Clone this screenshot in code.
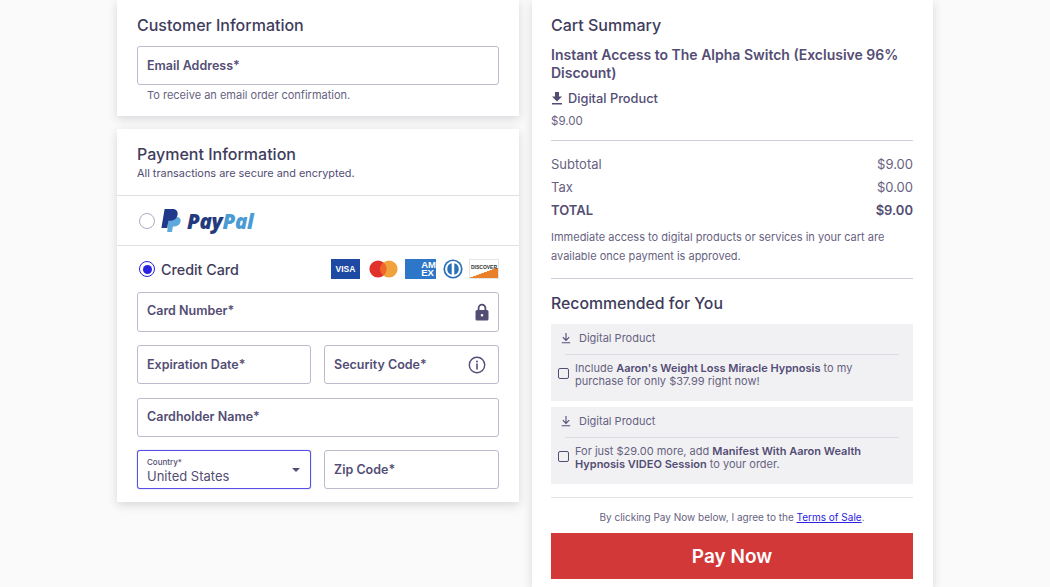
<div class="page">
  <div class="left">
    <section class="card customer">
      <h2>Customer Information</h2>
      <div class="field"><span class="label">Email Address*</span></div>
      <p class="helper">To receive an email order confirmation.</p>
    </section>

    <section class="card payment">
      <div class="pay-head">
        <h2>Payment Information</h2>
        <p class="secure">All transactions are secure and encrypted.</p>
      </div>
      <div class="paypal-row">
        <span class="radio"></span>
        <svg class="pp-mark" viewBox="0 0 20 24" width="20" height="24" aria-hidden="true">
          <path fill="#5fa8dc" d="M7.500 8h8.200c2.600 0 4.300 1.600 3.900 4.200-.6 3.400-2.900 5.200-5.900 5.200h-1.800l-.9 5.600H6.200z"/>
          <path fill="#1f3a8a" d="M3.600 0h7.600c3.600 0 6 2 5.400 5.600-.6 3.900-3.400 6.200-6.900 6.200H7.400L6.200 19H0.400z"/>
        </svg>
        <span class="pp-text"><span class="pp-dark">Pay</span><span class="pp-light">Pal</span></span>
      </div>
      <div class="cc">
        <div class="cc-head">
          <span class="radio on"><span></span></span>
          <span class="cc-title">Credit Card</span>
          <div class="logos">
            <span class="logo visa">VISA</span>
            <svg class="mc" viewBox="0 0 29 18" width="29" height="18" aria-hidden="true">
              <circle cx="9" cy="9" r="8.600" fill="#e1312b"/>
              <circle cx="20" cy="9" r="8.600" fill="#f0a23c"/>
              <path d="M14.500 2.400a8.600 8.600 0 0 1 0 13.200a8.600 8.600 0 0 1 0-13.200z" fill="#f0662a"/>
            </svg>
            <span class="logo amex"><span>AM<br />EX</span></span>
            <svg class="diners" viewBox="0 0 20 20" width="20" height="20" aria-hidden="true">
              <circle cx="10" cy="10" r="9.600" fill="#2a70b8"/>
              <circle cx="10" cy="10" r="7.900" fill="#fff"/>
              <path d="M8.700 4.200v11.600a6 6 0 0 1 0-11.600zM11.300 4.200a6 6 0 0 1 0 11.600z" fill="#2a70b8"/>
            </svg>
            <span class="logo discover"><span>DISCOVER</span></span>
          </div>
        </div>
        <div class="field card-num">
          <span class="label">Card Number*</span>
          <svg viewBox="0 0 14 18" width="14" height="18" aria-hidden="true">
            <path fill="none" stroke="#534d74" stroke-width="1.800" d="M3.600 8V5a3.400 3.400 0 0 1 6.800 0v3"/>
            <path fill="#534d74" fill-rule="evenodd" d="M2 7h10a1.500 1.500 0 0 1 1.500 1.500v7.500A1.500 1.500 0 0 1 12 17.500H2A1.500 1.500 0 0 1 .5 16V8.500A1.500 1.500 0 0 1 2 7zM7 11a1.300 1.300 0 1 0 0 2.600A1.300 1.300 0 0 0 7 11z"/>
          </svg>
        </div>
        <div class="two">
          <div class="field"><span class="label">Expiration Date*</span></div>
          <div class="field">
            <span class="label">Security Code*</span>
            <svg class="info" viewBox="0 0 18 18" width="18" height="18" aria-hidden="true">
              <circle cx="9" cy="9" r="7.700" fill="none" stroke="#534d74" stroke-width="1.400"/>
              <path d="M9 8v5" stroke="#534d74" stroke-width="1.600" stroke-linecap="round"/>
              <circle cx="9" cy="5.400" r="1" fill="#534d74"/>
            </svg>
          </div>
        </div>
        <div class="field holder"><span class="label">Cardholder Name*</span></div>
        <div class="two">
          <div class="field country">
            <div class="country-text">
              <span class="mini">Country*</span>
              <span class="value">United States</span>
            </div>
            <span class="caret"></span>
          </div>
          <div class="field"><span class="label">Zip Code*</span></div>
        </div>
      </div>
    </section>
  </div>

  <aside class="card summary">
    <h2>Cart Summary</h2>
    <h3>Instant Access to The Alpha Switch (Exclusive 96% Discount)</h3>
    <div class="product">
      <svg viewBox="0 0 12 14" width="12" height="14" aria-hidden="true">
        <path fill="#534d74" d="M4 1h4v4.500h3L6 10.500 1 5.500h3zM1 12h10v1.400H1z"/>
      </svg>
      <span>Digital Product</span>
    </div>
    <div class="price">$9.00</div>
    <hr class="rule first" />
    <div class="line"><span>Subtotal</span><span>$9.00</span></div>
    <div class="line"><span>Tax</span><span>$0.00</span></div>
    <div class="line total"><span>TOTAL</span><span>$9.00</span></div>
    <p class="access">Immediate access to digital products or services in your cart are available once payment is approved.</p>
    <hr class="rule mid" />
    <h2 class="rec">Recommended for You</h2>

    <div class="offer">
      <div class="offer-head">
        <svg viewBox="0 0 10 12" width="10" height="12" aria-hidden="true">
          <path fill="none" stroke="#534d74" stroke-width="1.100" d="M5 1v7M1.800 5.200 5 8.400l3.200-3.200M.8 10.700h8.400"/>
        </svg>
        <span>Digital Product</span>
      </div>
      <div class="offer-body">
        <span class="check"></span>
        <p>Include <b>Aaron's Weight Loss Miracle Hypnosis</b> to my purchase for only $37.99 right now!</p>
      </div>
    </div>
    <div class="offer">
      <div class="offer-head">
        <svg viewBox="0 0 10 12" width="10" height="12" aria-hidden="true">
          <path fill="none" stroke="#534d74" stroke-width="1.100" d="M5 1v7M1.800 5.200 5 8.400l3.200-3.200M.8 10.700h8.400"/>
        </svg>
        <span>Digital Product</span>
      </div>
      <div class="offer-body">
        <span class="check"></span>
        <p>For just $29.00 more, add <b>Manifest With Aaron Wealth Hypnosis VIDEO Session</b> to your order.</p>
      </div>
    </div>

    <hr class="rule last" />
    <p class="terms">By clicking Pay Now below, I agree to the <a href="#terms">Terms of Sale</a>.</p>
    <button class="pay" type="button">Pay Now</button>
  </aside>
</div>

<style>
  :global(body) {
    margin: 0;
    background: #fafafa;
  }
  * { box-sizing: border-box; }
  .page {
    height: 587px;
    overflow: hidden;
    display: flex;
    align-items: stretch;
    gap: 13px;
    padding-left: 117px;
    font-family: Inter, "Noto Sans", sans-serif;
    color: #534d74;
  }
  .left {
    width: 402px;
    display: flex;
    flex-direction: column;
    gap: 13px;
  }
  .card {
    background: #fff;
    box-shadow: 0 3px 9px rgba(40, 40, 60, 0.16);
  }
  h2 {
    margin: 0;
    font-size: 16px;
    line-height: 20px;
    font-weight: 500;
    color: #403c5c;
  }
  p { margin: 0; }
  .customer {
    height: 116px;
    flex: none;
    padding: 15px 20px 0;
  }
  .payment { flex: none; }
  .field {
    height: 39px;
    flex: none;
    padding: 0 9px;
    border: 1px solid #bdbacd;
    border-radius: 3px;
    display: flex;
    align-items: center;
    justify-content: space-between;
    background: #fff;
  }
  .customer .field { margin-top: 11px; }
  .label {
    font-size: 12.500px;
    font-weight: 600;
    color: #534d74;
    margin-top: -1px;
  }
  .helper {
    margin: 3px 0 0 10px;
    font-size: 11px;
    line-height: 15px;
    color: #67627f;
  }
  .pay-head {
    height: 67px;
    padding: 15px 20px 0;
    border-bottom: 1px solid #dfdfe6;
  }
  .secure {
    font-size: 10.900px;
    line-height: 15px;
    margin-top: 2px;
    color: #534d74;
  }
  .paypal-row {
    height: 50px;
    padding-left: 22px;
    display: flex;
    align-items: center;
    border-bottom: 1px solid #dfdfe6;
  }
  .radio {
    width: 16px;
    height: 16px;
    border-radius: 50%;
    border: 1.500px solid #aeabbf;
    flex: none;
    display: flex;
    align-items: center;
    justify-content: center;
  }
  .radio.on { border-color: #2a22e0; }
  .radio.on span {
    width: 9px;
    height: 9px;
    border-radius: 50%;
    background: #2a22e0;
  }
  .pp-mark { margin-left: 6px; }
  .pp-text {
    margin-left: 6px;
    font-family: "Open Sans", sans-serif;
    font-size: 20.500px;
    font-weight: 800;
    font-style: italic;
    letter-spacing: -0.3px;
  }
  .pp-dark { color: #233a7d; }
  .pp-light { color: #4a9bd4; }
  .cc {
    padding: 12px 20px 13px;
    display: flex;
    flex-direction: column;
    gap: 13px;
  }
  .cc-head {
    height: 22px;
    margin-bottom: -1px;
    padding-left: 2px;
    display: flex;
    align-items: center;
  }
  .cc-title {
    margin-left: 6px;
    font-size: 14.300px;
    font-weight: 500;
    color: #403c5c;
  }
  .logos {
    margin-left: auto;
    display: flex;
    align-items: center;
    gap: 7px;
  }
  .logos .mc { margin-left: 2px; }
  .logo {
    display: flex;
    align-items: center;
    justify-content: center;
    height: 20px;
    font-family: "Liberation Sans", sans-serif;
  }
  .visa {
    width: 29px;
    background: #1e4aa3;
    color: #fff;
    font-size: 8.500px;
    font-weight: 700;
  }
  .amex {
    width: 31px;
    background: #2e77c8;
    color: #fff;
    font-size: 9.500px;
    font-weight: 700;
    line-height: 8.500px;
    justify-content: flex-end;
  }
  .discover {
    width: 30px;
    margin-left: -1px;
    background: linear-gradient(160deg, #fff 62%, #e8802c 63%);
    border: 1px solid #e5e5e5;
    color: #333;
    font-size: 5px;
    font-weight: 700;
    padding-bottom: 4px;
  }
  .card-num { height: 40px; }
  .card-num .label { margin-top: -4px; }
  .holder { margin-top: 1px; }
  .holder .label { margin-top: -2px; }
  .two {
    display: flex;
    gap: 13px;
  }
  .two .field { flex: 1; }
  .two .field:first-child { flex: 0 0 174px; }
  .info { margin-right: 3px; }
  .country {
    border-color: #5a50e6;
    box-shadow: 0 0 1px #5a50e6;
  }
  .country-text {
    display: flex;
    flex-direction: column;
    margin-top: 3px;
  }
  .mini {
    font-size: 8px;
    line-height: 11px;
    font-weight: 500;
  }
  .value {
    font-size: 13px;
    line-height: 17px;
  }
  .caret {
    width: 0;
    height: 0;
    border-left: 4.500px solid transparent;
    border-right: 4.500px solid transparent;
    border-top: 4.500px solid #534d74;
    margin-right: 1px;
  }
  .summary {
    width: 401px;
    flex: none;
    padding: 15px 20px 0 19px;
  }
  h3 {
    margin: 11px 0 0;
    font-size: 14px;
    line-height: 18px;
    font-weight: 600;
    color: #534d74;
  }
  .product {
    margin-top: 7px;
    height: 18px;
    display: flex;
    align-items: center;
    gap: 5px;
    font-size: 12.800px;
    font-weight: 500;
  }
  .price {
    margin-top: 6px;
    font-size: 11.500px;
    line-height: 16px;
    color: #67627f;
  }
  .rule {
    margin: 11px 0 0;
    border: 0;
    border-top: 1px solid #cfcfdb;
  }
  .line {
    display: flex;
    justify-content: space-between;
    height: 23px;
    align-items: center;
    font-size: 13px;
    color: #67627f;
  }
  .rule.first + .line { margin-top: 11px; }
  .total {
    font-weight: 600;
    color: #534d74;
  }
  .access {
    margin-top: 7px;
    font-size: 11px;
    line-height: 19px;
    color: #67627f;
  }
  .rule.mid { margin-top: 12px; }
  .rec {
    margin-top: 15px;
    font-size: 15.800px;
  }
  .offer {
    height: 77px;
    margin-top: 6px;
    padding: 0 14px 0 7px;
    background: #f1f1f4;
  }
  .rec + .offer { margin-top: 10px; }
  .offer-head {
    height: 31px;
    margin-left: 7px;
    padding: 0 0 2px 2px;
    display: flex;
    align-items: center;
    gap: 8px;
    font-size: 11px;
    color: #67627f;
    border-bottom: 1px solid #dcdce5;
  }
  .offer-head svg { margin-left: -6px; }
  .offer-body {
    display: flex;
    align-items: center;
    gap: 6px;
    margin-top: 7px;
    font-size: 11px;
    line-height: 13px;
    color: #67627f;
  }
  .offer-body b {
    font-weight: 600;
    color: #534d74;
  }
  .check {
    width: 11px;
    height: 11px;
    border: 1.500px solid #534d74;
    border-radius: 2px;
    flex: none;
    margin-top: -4px;
  }
  .rule.last {
    margin-top: 13px;
    border-color: #e4e4e8;
  }
  .terms {
    margin-top: 12px;
    text-align: center;
    font-size: 10px;
    line-height: 15px;
    color: #67627f;
  }
  .terms a { color: #2a22e0; }
  .pay {
    display: block;
    width: 100%;
    height: 46px;
    margin-top: 8px;
    border: 0;
    background: #d23838;
    color: #fff;
    font-family: inherit;
    font-size: 19px;
    font-weight: 600;
  }
</style>
